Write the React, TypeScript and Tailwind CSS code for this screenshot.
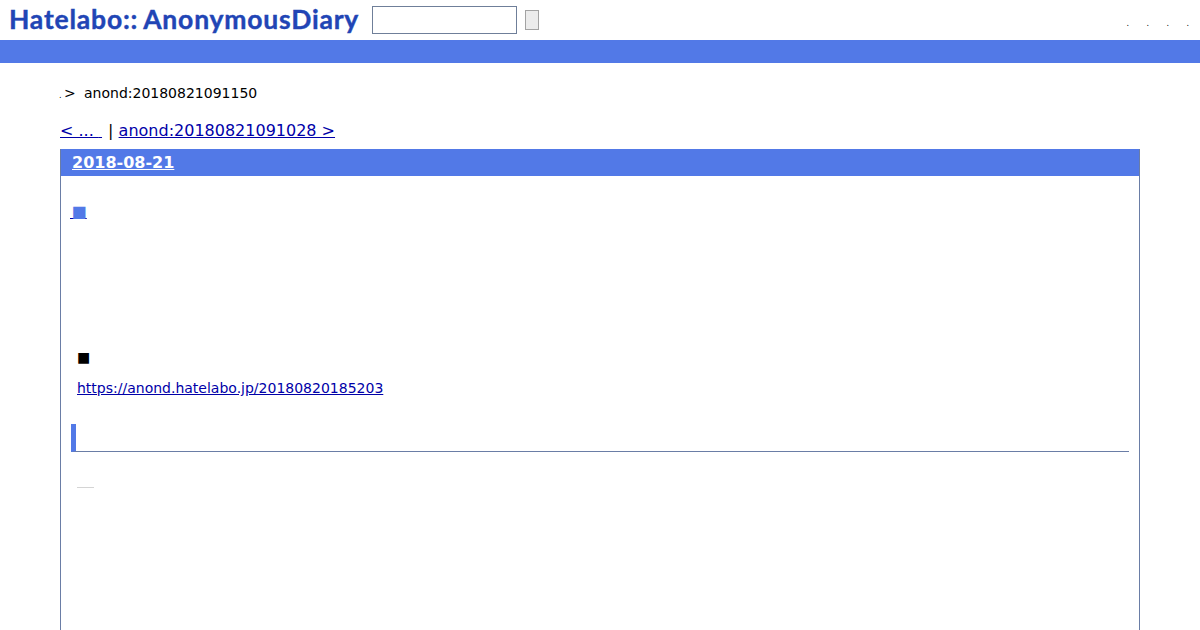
import React from 'react';

const App: React.FC = () => {
  return (
    <div className="h-[630px] overflow-hidden bg-white text-black font-['DejaVu_Sans',sans-serif]">
      {/* Header */}
      <header className="flex h-10 items-start">
        <h1 className="ml-[9px] mt-[2px] flex w-[350px] whitespace-nowrap font-['Lato',sans-serif] text-[26.5px] font-bold leading-[34px] tracking-[0.8px] text-[#2145b5] [-webkit-text-stroke:0.4px_#2145b5]">
          <span>Hatelabo::</span>
          <span className="ml-[5px]">AnonymousDiary</span>
        </h1>
        <input className="ml-[13px] mt-[6px] h-7 w-[145px] border border-[#6f7f99] bg-white" />
        <button className="ml-2 mt-[10px] h-5 w-[14px] border border-[#a3a3a3] bg-[#ececec]" />
        <ul className="ml-auto mr-[12.5px] mt-[20px] flex gap-[19px] text-[8px] leading-[8px] text-black">
          <li className="w-px">.</li>
          <li className="w-px">.</li>
          <li className="w-px">.</li>
          <li className="w-px">.</li>
        </ul>
      </header>
      <div className="h-[23px] bg-[#5279e7]" />

      <main className="px-[60px]">
        {/* Breadcrumb */}
        <p className="mt-[21px] flex h-[18px] items-center text-[14px] leading-[18px]">
          <span className="-ml-px mt-[6px] w-[5px] text-[8px] leading-[8px]">.</span>
          <span className="w-[20px]">&gt;</span>
          <span>anond:20180821091150</span>
        </p>

        {/* Prev / next */}
        <p className="mt-[19px] h-[19px] whitespace-pre text-[16px] leading-[19px]">
          <a href="#" className="text-[#0000a8] underline">&lt; ... <span className="text-[10px]"> </span></a>
          <span className="ml-px"> | </span>
          <a href="#" className="text-[#0000a8] underline">anond:20180821091028 &gt;</a>
        </p>

        {/* Day section */}
        <section className="mt-[9px] h-[500px] border-x border-[#6a7da6]">
          <h2 className="h-[27px] bg-[#5279e7] pl-[11px] text-[16px] font-bold leading-[27px] text-white">
            <a href="#" className="underline">2018-08-21</a>
          </h2>
          <div className="px-[10px]">
            <h3 className="-ml-px mt-[26px] h-[19px] text-[16px] leading-[19px]">
              <a href="#" className="text-[#5279e7] underline decoration-[#0000a8]">&#8202;■</a>
            </h3>
            <p className="ml-[6px] mt-[126px] h-[20px] text-[14px] leading-[20px]">■</p>
            <p className="ml-[6px] mt-[11px] h-[20px] text-[14px] leading-[20px]">
              <a href="#" className="text-[#0000a8] underline">https://anond.hatelabo.jp/20180820185203</a>
            </p>
            <div className="mt-[26px] h-7 border-b border-l-[5px] border-b-[#6a7da6] border-l-[#5279e7]" />
            <div className="ml-[6px] mt-[35px] h-px w-[17px] bg-[#d4d4d4]" />
          </div>
        </section>
      </main>
    </div>
  );
};

export default App;
